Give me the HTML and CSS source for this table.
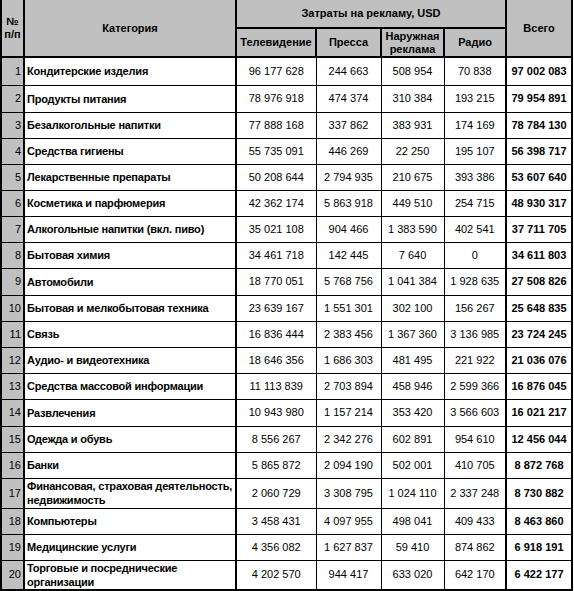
FILE: index.html
```html
<!DOCTYPE html>
<html lang="ru">
<head>
<meta charset="utf-8">
<title>Затраты на рекламу</title>
<link rel="stylesheet" href="styles.css">
</head>
<body>
<table class="report">
  <colgroup>
    <col class="c-no"><col class="c-cat"><col class="c-tv"><col class="c-press"><col class="c-out"><col class="c-radio"><col class="c-total">
  </colgroup>
  <thead>
    <tr class="hr1">
      <th rowspan="2" class="first">№<br>п/п</th>
      <th rowspan="2" class="first">Категория</th>
      <th colspan="4" class="first">Затраты на рекламу, USD</th>
      <th rowspan="2" class="first">Всего</th>
    </tr>
    <tr class="hr2">
      <th>Телевидение</th>
      <th>Пресса</th>
      <th>Наружная<br>реклама</th>
      <th>Радио</th>
    </tr>
  </thead>
  <tbody>
    <tr class="r28"><td class="no">1</td><td class="cat">Кондитерские изделия</td><td>96 177 628</td><td>244 663</td><td>508 954</td><td>70 838</td><td class="total">97 002 083</td></tr>
    <tr class="r27"><td class="no">2</td><td class="cat">Продукты питания</td><td>78 976 918</td><td>474 374</td><td>310 384</td><td>193 215</td><td class="total">79 954 891</td></tr>
    <tr class="r26"><td class="no">3</td><td class="cat">Безалкогольные напитки</td><td>77 888 168</td><td>337 862</td><td>383 931</td><td>174 169</td><td class="total">78 784 130</td></tr>
    <tr class="r26"><td class="no">4</td><td class="cat">Средства гигиены</td><td>55 735 091</td><td>446 269</td><td>22 250</td><td>195 107</td><td class="total">56 398 717</td></tr>
    <tr class="r26"><td class="no">5</td><td class="cat">Лекарственные препараты</td><td>50 208 644</td><td>2 794 935</td><td>210 675</td><td>393 386</td><td class="total">53 607 640</td></tr>
    <tr class="r26"><td class="no">6</td><td class="cat">Косметика и парфюмерия</td><td>42 362 174</td><td>5 863 918</td><td>449 510</td><td>254 715</td><td class="total">48 930 317</td></tr>
    <tr class="r26"><td class="no">7</td><td class="cat">Алкогольные напитки (вкл. пиво)</td><td>35 021 108</td><td>904 466</td><td>1 383 590</td><td>402 541</td><td class="total">37 711 705</td></tr>
    <tr class="r26"><td class="no">8</td><td class="cat">Бытовая химия</td><td>34 461 718</td><td>142 445</td><td>7 640</td><td>0</td><td class="total">34 611 803</td></tr>
    <tr class="r27"><td class="no">9</td><td class="cat">Автомобили</td><td>18 770 051</td><td>5 768 756</td><td>1 041 384</td><td>1 928 635</td><td class="total">27 508 826</td></tr>
    <tr class="r26"><td class="no">10</td><td class="cat">Бытовая и мелкобытовая техника</td><td>23 639 167</td><td>1 551 301</td><td>302 100</td><td>156 267</td><td class="total">25 648 835</td></tr>
    <tr class="r26"><td class="no">11</td><td class="cat">Связь</td><td>16 836 444</td><td>2 383 456</td><td>1 367 360</td><td>3 136 985</td><td class="total">23 724 245</td></tr>
    <tr class="r26"><td class="no">12</td><td class="cat">Аудио- и видеотехника</td><td>18 646 356</td><td>1 686 303</td><td>481 495</td><td>221 922</td><td class="total">21 036 076</td></tr>
    <tr class="r26"><td class="no">13</td><td class="cat">Средства массовой информации</td><td>11 113 839</td><td>2 703 894</td><td>458 946</td><td>2 599 366</td><td class="total">16 876 045</td></tr>
    <tr class="r27"><td class="no">14</td><td class="cat">Развлечения</td><td>10 943 980</td><td>1 157 214</td><td>353 420</td><td>3 566 603</td><td class="total">16 021 217</td></tr>
    <tr class="r26"><td class="no">15</td><td class="cat">Одежда и обувь</td><td>8 556 267</td><td>2 342 276</td><td>602 891</td><td>954 610</td><td class="total">12 456 044</td></tr>
    <tr class="r26"><td class="no">16</td><td class="cat">Банки</td><td>5 865 872</td><td>2 094 190</td><td>502 001</td><td>410 705</td><td class="total">8 872 768</td></tr>
    <tr class="r30"><td class="no">17</td><td class="cat">Финансовая, страховая деятельность, недвижимость</td><td>2 060 729</td><td>3 308 795</td><td>1 024 110</td><td>2 337 248</td><td class="total">8 730 882</td></tr>
    <tr class="r26"><td class="no">18</td><td class="cat">Компьютеры</td><td>3 458 431</td><td>4 097 955</td><td>498 041</td><td>409 433</td><td class="total">8 463 860</td></tr>
    <tr class="r26"><td class="no">19</td><td class="cat">Медицинские услуги</td><td>4 356 082</td><td>1 627 837</td><td>59 410</td><td>874 862</td><td class="total">6 918 191</td></tr>
    <tr class="r28 last"><td class="no">20</td><td class="cat">Торговые и посреднические организации</td><td>4 202 570</td><td>944 417</td><td>633 020</td><td>642 170</td><td class="total">6 422 177</td></tr>
  </tbody>
</table>
</body>
</html>
```

FILE: styles.css
```css
html, body {
  margin: 0;
  padding: 0;
  background: #ffffff;
}

.report {
  border-collapse: collapse;
  table-layout: fixed;
  width: 573px;
  font-family: "Liberation Sans", Arial, sans-serif;
  font-size: 11px;
  line-height: 13px;
  color: #000000;
}

.c-no { width: 23px; }
.c-cat { width: 212px; }
.c-tv { width: 80px; }
.c-press { width: 65px; }
.c-out { width: 63px; }
.c-radio { width: 62px; }
.c-total { width: 66px; }

.report th,
.report td {
  padding: 0 2px;
  vertical-align: middle;
  overflow: hidden;
  white-space: nowrap;
}

.report th {
  border: 2px solid #000000;
  background: #c0c0c0;
  font-weight: bold;
  text-align: center;
}

.report th.first {
  border-top: none;
}

.hr1 { height: 28px; }
.hr2 { height: 29px; }

.report td {
  border: 1px solid #000000;
  text-align: center;
  background: #ffffff;
}

.report td.no {
  background: #c0c0c0;
  text-align: right;
  border-left: 2px solid #000000;
  border-right: 2px solid #000000;
  padding-right: 2px;
}

.report td.cat {
  text-align: left;
  font-weight: bold;
  border-right: 2px solid #000000;
  white-space: normal;
  padding-left: 2px;
  padding-right: 0;
  letter-spacing: -0.2px;
  line-height: 14px;
}

.report td.total {
  font-weight: bold;
  border-left: 2px solid #000000;
  border-right: 2px solid #000000;
}

.report tr.last td {
  border-bottom: 2px solid #000000;
}

.r26 { height: 26px; }
.r27 { height: 27px; }
.r28 { height: 28px; }
.r30 { height: 30px; }
```
